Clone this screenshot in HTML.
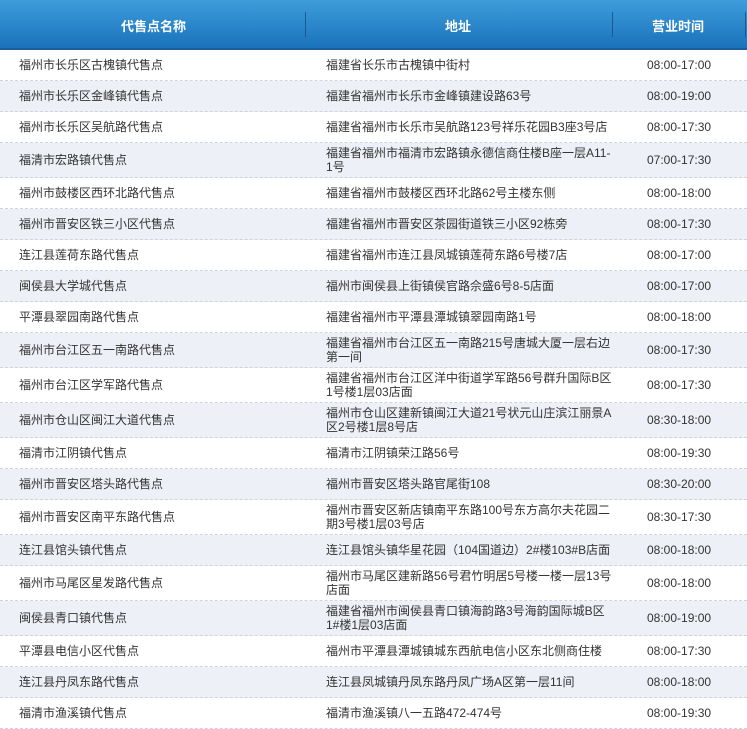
<!DOCTYPE html>
<html><head><meta charset="utf-8"><style>
*{margin:0;padding:0;box-sizing:border-box}
body{width:747px;height:728px;overflow:hidden;background:#fff;font-family:"Liberation Sans","Noto Sans CJK SC",sans-serif;font-size:12px;color:#333}
.hd{height:50px;background:linear-gradient(#3d9ddb,#1b72bb);border-bottom:2px solid #1a5f9c;position:relative;color:#fff;font-weight:bold;font-size:13px}
.hd span{position:absolute;top:16px}
.sep{position:absolute;top:12px;width:1px;height:25px;background:#1a5a94}
.r{position:relative;height:31px;border-bottom:1px dashed #cfd3da}
.r.d{height:35px}
.r:nth-child(even){background:#eef0f7}
.r div{position:absolute;top:0;bottom:0;display:flex;align-items:center;line-height:14px}
.a{left:19px;width:280px}.b{left:326px;width:290px}.c{left:647px}
</style></head><body>
<div class="hd"><span style="left:121px">代售点名称</span><span style="left:445px">地址</span><span style="left:652px">营业时间</span><div class="sep" style="left:305px"></div><div class="sep" style="left:612px"></div><div class="sep" style="left:745px"></div></div>
<div id="t">
<div class="r"><div class="a">福州市长乐区古槐镇代售点</div><div class="b">福建省长乐市古槐镇中街村</div><div class="c">08:00-17:00</div></div>
<div class="r"><div class="a">福州市长乐区金峰镇代售点</div><div class="b">福建省福州市长乐市金峰镇建设路63号</div><div class="c">08:00-19:00</div></div>
<div class="r"><div class="a">福州市长乐区吴航路代售点</div><div class="b">福建省福州市长乐市吴航路123号祥乐花园B3座3号店</div><div class="c">08:00-17:30</div></div>
<div class="r d"><div class="a">福清市宏路镇代售点</div><div class="b">福建省福州市福清市宏路镇永德信商住楼B座一层A11-<br>1号</div><div class="c">07:00-17:30</div></div>
<div class="r"><div class="a">福州市鼓楼区西环北路代售点</div><div class="b">福建省福州市鼓楼区西环北路62号主楼东侧</div><div class="c">08:00-18:00</div></div>
<div class="r"><div class="a">福州市晋安区铁三小区代售点</div><div class="b">福建省福州市晋安区茶园街道铁三小区92栋旁</div><div class="c">08:00-17:30</div></div>
<div class="r"><div class="a">连江县莲荷东路代售点</div><div class="b">福建省福州市连江县凤城镇莲荷东路6号楼7店</div><div class="c">08:00-17:00</div></div>
<div class="r"><div class="a">闽侯县大学城代售点</div><div class="b">福州市闽侯县上街镇侯官路佘盛6号8-5店面</div><div class="c">08:00-17:00</div></div>
<div class="r"><div class="a">平潭县翠园南路代售点</div><div class="b">福建省福州市平潭县潭城镇翠园南路1号</div><div class="c">08:00-18:00</div></div>
<div class="r d"><div class="a">福州市台江区五一南路代售点</div><div class="b">福建省福州市台江区五一南路215号唐城大厦一层右边<br>第一间</div><div class="c">08:00-17:30</div></div>
<div class="r d"><div class="a">福州市台江区学军路代售点</div><div class="b">福建省福州市台江区洋中街道学军路56号群升国际B区<br>1号楼1层03店面</div><div class="c">08:00-17:30</div></div>
<div class="r d"><div class="a">福州市仓山区闽江大道代售点</div><div class="b">福州市仓山区建新镇闽江大道21号状元山庄滨江丽景A<br>区2号楼1层8号店</div><div class="c">08:30-18:00</div></div>
<div class="r"><div class="a">福清市江阴镇代售点</div><div class="b">福清市江阴镇荣江路56号</div><div class="c">08:00-19:30</div></div>
<div class="r"><div class="a">福州市晋安区塔头路代售点</div><div class="b">福州市晋安区塔头路官尾街108</div><div class="c">08:30-20:00</div></div>
<div class="r d"><div class="a">福州市晋安区南平东路代售点</div><div class="b">福州市晋安区新店镇南平东路100号东方高尔夫花园二<br>期3号楼1层03号店</div><div class="c">08:30-17:30</div></div>
<div class="r"><div class="a">连江县馆头镇代售点</div><div class="b">连江县馆头镇华星花园（104国道边）2#楼103#B店面</div><div class="c">08:00-18:00</div></div>
<div class="r d"><div class="a">福州市马尾区星发路代售点</div><div class="b">福州市马尾区建新路56号君竹明居5号楼一楼一层13号<br>店面</div><div class="c">08:00-18:00</div></div>
<div class="r d"><div class="a">闽侯县青口镇代售点</div><div class="b">福建省福州市闽侯县青口镇海韵路3号海韵国际城B区<br>1#楼1层03店面</div><div class="c">08:00-19:00</div></div>
<div class="r"><div class="a">平潭县电信小区代售点</div><div class="b">福州市平潭县潭城镇城东西航电信小区东北侧商住楼</div><div class="c">08:00-17:30</div></div>
<div class="r"><div class="a">连江县丹凤东路代售点</div><div class="b">连江县凤城镇丹凤东路丹凤广场A区第一层11间</div><div class="c">08:00-18:00</div></div>
<div class="r"><div class="a">福清市渔溪镇代售点</div><div class="b">福清市渔溪镇八一五路472-474号</div><div class="c">08:00-19:30</div></div>
</div>
</body></html>
